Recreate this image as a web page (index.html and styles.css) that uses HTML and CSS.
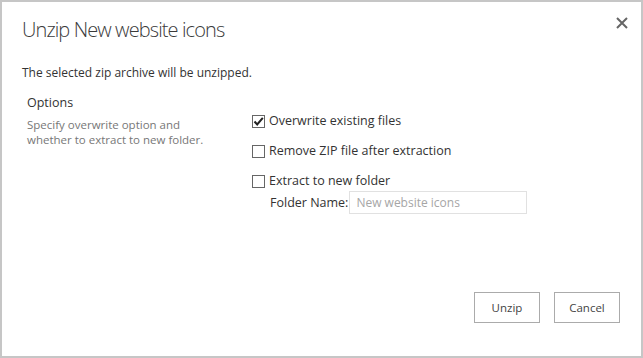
FILE: index.html
```html
<!DOCTYPE html>
<html>
<head>
<meta charset="utf-8">
<link rel="stylesheet" href="styles.css">
</head>
<body>
<div class="dialog">
  <div class="header">
    <h1 class="title">Unzip New website icons</h1>
    <button class="close" aria-label="Close">
      <svg width="12" height="12" viewBox="0 0 12 12"><path d="M1 1L11 11M11 1L1 11" stroke="#666" stroke-width="2"/></svg>
    </button>
  </div>
  <p class="intro">The selected zip archive will be unzipped.</p>
  <div class="section">
    <div class="side">
      <div class="side-title">Options</div>
      <div class="side-desc">Specify overwrite option and whether to extract to new folder.</div>
    </div>
    <div class="opts">
      <label class="opt"><span class="box checked"><svg width="11" height="11" viewBox="0 0 11 11"><path d="M1.5 5.5L4.2 8.5L9.8 1.8" stroke="#222" stroke-width="2" fill="none"/></svg></span>Overwrite existing files</label>
      <label class="opt"><span class="box"></span>Remove ZIP file after extraction</label>
      <label class="opt"><span class="box"></span>Extract to new folder</label>
      <div class="folder">
        <span class="folder-label">Folder Name:</span>
        <span class="input">New website icons</span>
      </div>
    </div>
  </div>
  <div class="actions">
    <button class="btn">Unzip</button>
    <button class="btn">Cancel</button>
  </div>
</div>
</body>
</html>
```
FILE: styles.css
```css
html, body { margin: 0; padding: 0; background: #fff; }
body { font-family: "Open Sans", "Noto Sans", sans-serif; color: #444; }
.dialog {
  box-sizing: border-box;
  width: 643px;
  height: 358px;
  border: 2px solid #c6c6c6;
  padding: 0 0 0 20px;
  display: flex;
  flex-direction: column;
  position: relative;
}
.header { display: flex; justify-content: space-between; align-items: flex-start; }
.title {
  margin: 14px 0 0 0;
  font-size: 20px;
  font-weight: 300;
  color: #3a3a3a;
  line-height: 28px;
  letter-spacing: -0.9px;
}
.close {
  border: none; background: none; padding: 0; margin: 15px 13px 0 0;
  width: 12px; height: 12px; display: flex;
}
.intro { margin: 20px 0 0 0; font-size: 12px; line-height: 18px; color: #333; }
.section { display: flex; margin-top: 12px; }
.side { width: 225px; padding-left: 5px; }
.side-title { font-size: 12.5px; line-height: 18px; color: #333; }
.side-desc { font-size: 11.5px; line-height: 15px; color: #777; margin-top: 5px; width: 180px; }
.opts { display: flex; flex-direction: column; padding-top: 18px; }
.opt { display: flex; align-items: center; font-size: 12.5px; line-height: 18px; color: #333; margin-bottom: 12px; }
.opt:nth-child(3) { margin-bottom: 1px; }
.box {
  box-sizing: border-box; width: 13px; height: 13px; border: 1px solid #666;
  margin-right: 4px; display: flex; align-items: center; justify-content: center; background: #fff;
}
.folder { display: flex; align-items: center; padding-left: 18px; }
.folder-label { font-size: 12.5px; color: #333; margin-right: 1px; }
.input {
  box-sizing: border-box; width: 178px; height: 23px; border: 1px solid #e1e1e1;
  font-size: 12px; color: #a6a6a6; padding: 0 6px; line-height: 21px;
}
.actions { margin-top: auto; display: flex; justify-content: flex-end; gap: 14px; padding: 0 21px 33px 0; }
.btn {
  box-sizing: border-box; width: 66px; height: 31px; border: 1px solid #ababab; background: #fff;
  font-family: "Open Sans", "Noto Sans", sans-serif; font-size: 11.5px; color: #444; padding: 0;
}
```
